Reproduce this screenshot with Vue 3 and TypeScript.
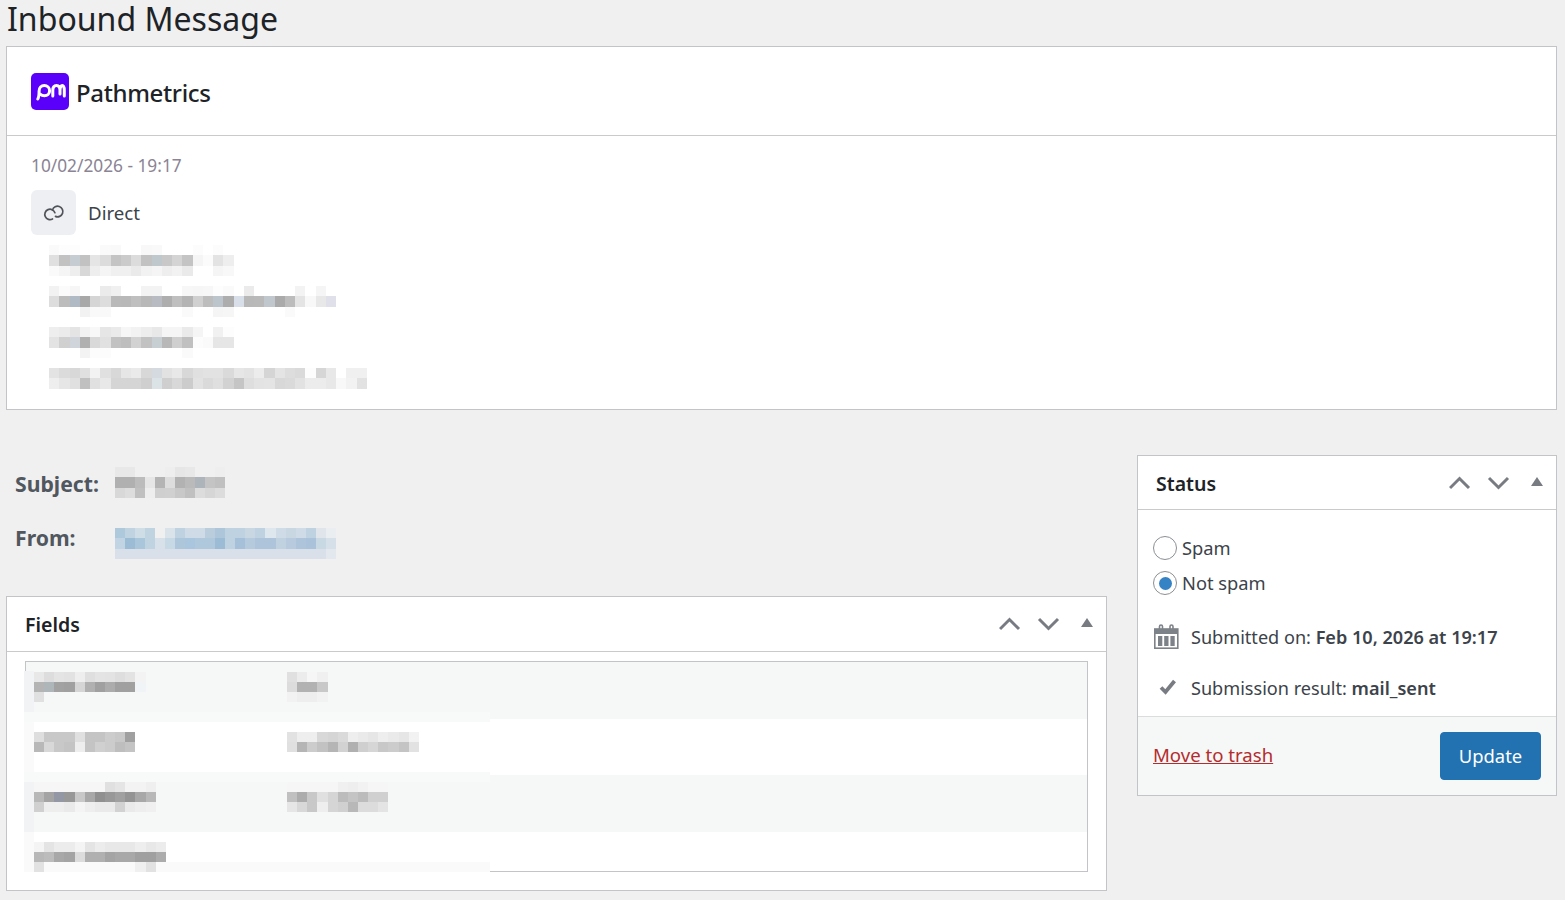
<script setup lang="ts">
const parse = (rows: string[]) =>
  rows.map((r) => r.split(' ').map((c) => (c.length === 2 ? `#${c}${c}${c}` : `#${c}`)))

const mainMosaics = [
  ['fa fd fd ff ff fa f9 ff ff f8 f9 ff ff ff fc ff fc ff', 'e0 c2 c6cdd2 c2 e5 dc c4 cb dc c2 bfc8cc c8 d4 c4 f5 fb e3 ee', 'fa f5 ee d8 ee f5 f0 f0 ea f2 f5 ee f2 ea ff ff f5 f8'],
  ['f2 fb f6 ff ff eb f0 ff ff f3 f3 ff ff f7 f6 f7 fd fa ff eb ff ff ff ff f3 ff f5 ff', 'dd bc b0bac5 a8 d5 dd b9 b8 bf b8 b8bcc2 ae bf b4 d0 bd bcc4cc ad d8dfe8 b8 b9 c0c8ce aa bc e4 f8 e8 e0e0ea', 'ff ff ff f2 f9 f9 ff ff ff ff ff ff ff fa ff ff f5 f6 ff ff ff ff ff fa ff ff ff ff'],
  ['ee eb e4 f2 f8 e6 ea f6 f2 ed e8 f5 f5 ea f5 ff f1 fd', 'e3 d0 cfd5da b0 d9 e1 c2 be d2 c2 c8cfd2 b8 cf c0 fc fa e6 e6', 'ff ff ff f3 fc fc ff ff ff ff ff ff ff fa ff ff ff ff'],
  ['e3 db d8 e0 f2 e0 d8 e6 ea d8 d5dae0 e2 e8 d8 e0 e2 e2 da e6 e3 ec d5 e4 dd da fd d6 e8 ff f0 f0', 'ee e6 e0 c0 e0 e8 d5 d5 d5 cf dce3e6 cf d8 cc e2 da df d2 c5 de e3 e4 d8 da e2 ec ec e8 f8 f2 e2'],
].map(parse)

const subject = parse([
  'e8 e8 f0 f0 f0 ee e6 e8 f0 f0 ee',
  'b0 b0 bc e6 b4 dd b2 ba adb5ba c4 c0',
  'd8 dd c0 ee cf d0 c8 c0 dc d6 dc',
])

const from = parse([
  'aec8dc bfd3e1 cfdde7 bfd3e1 f0f0f0 dae3ea bfd2e1 cfdbe6 cfdbe6 b9cddd aec6da bfd2e1 bfd2e1 c9d7e3 bfd2e1 dfe7ee cfdbe6 c9d7e3 cfdbe6 bfd2e1 dfe5ea ebeef0',
  'c0d4e3 9cbcd6 aac6db bfd3e1 d8e1ea c8d9e6 aec6da aac6de afc8dc afc8dc 9cbcd6 bfd2e1 a5c0d8 b5cbdd aec4da aec4da c0d2e0 b8cbde aec4da abc3da c9d9e3 d5e0e8',
  'd9e0ea d9e0ea d9e0ea d9e0ea d9e0ea d9e0ea d9e0ea d9e0ea d9e0ea d9e0ea d9e0ea d9e0ea d9e0ea d9e0ea d9e0ea d9e0ea d9e0ea d9e0ea d9e0ea d9e0ea d9e0ea e3e7ee',
])

const tableRows = [
  {
    cls: 'row-a', pad: 10,
    name: parse(['e8 dd e4 e2 ee df e4 e3 de e3 f3', 'b4 aeb6ba a2 a0 d5 b0 a0 ac a0 a0 f0f4f7', 'e0']),
    value: parse(['e0 ec f6 f0', 'dc b2 b2 c8', 'f2 ee ee f2']),
  },
  {
    cls: 'row-b', pad: 13,
    name: parse(['de c8 c8 c8 e0 c4 c4 cc c8 a0', 'b8 d8 c8 c4 ee c4 d0 cc be c4']),
    value: parse(['e2 ee ee d8 d5 da ee ea e6 ee ea e6 f2', 'e0 b5 cc c2 b5 d2 b0 cf d6 c8 cc c4 e2']),
  },
  {
    cls: 'row-c', pad: 7,
    name: parse(['f6 f6 f6 f6 f6 f6 f6 e0 e5 f3 f3 ef', 'b8 a4 9498a4 98 c8 a8 90 98 a0 94 a8 b8', 'd0 ee ee ea f4 ee ea ea d2 ea ee f0']),
    value: parse(['f6 f6 f6 f6 f6 f0 ee f2 f6 f6', 'c0 ac c8 e0 d5 bc c4 bc d0 d0', 'e6 d8 c8 ee d5 d0 b8 dc dc e4']),
  },
  {
    cls: 'row-d', pad: 10,
    name: parse(['f4 e4 ec ec f4 e4 ec e8 e8 e8 ee e8 ec', 'b8 bc a8 a4 dc b0 b0 a4 a8 a8 a0 a0 ac', 'e2 fa fa fa fa fa fa fa fa fa f0 e2']),
    value: [] as string[][],
  },
]

/* faint bands that spill out of the pixelated area of the table */
const bands = [
  { left: -1, top: 10, width: 10, height: 41, background: '#f1f3f5' },
  { left: -1, top: 51, width: 466, height: 10, background: '#f8f9f9' },
  { left: -1, top: 61, width: 10, height: 50, background: '#fafafa' },
  { left: -1, top: 111, width: 466, height: 10, background: '#f8f9f9' },
  { left: -1, top: 121, width: 10, height: 50, background: '#f1f3f5' },
  { left: -1, top: 171, width: 10, height: 30, background: '#fafafa' },
  { left: -1, top: 201, width: 466, height: 10, background: '#fafafa' },
]
const px = (b: Record<string, number | string>) => ({
  left: `${b.left}px`, top: `${b.top}px`, width: `${b.width}px`, height: `${b.height}px`, background: String(b.background),
})
</script>

<template>
  <div class="page">
    <h1 class="title">Inbound Message</h1>

    <section class="panel overview">
      <header class="brand">
        <svg class="logo" width="38" height="37" viewBox="0 0 38 37">
          <rect width="38" height="37" rx="5" fill="#5a00fa" />
          <g fill="none" stroke="#fff" stroke-width="3" stroke-linecap="round">
            <path d="M6.800 26c1.300-2 1.300-4.500 1.300-8 0-3 2.200-5.500 5.200-5.500s5.300 2.300 5.300 5.200-2.300 5-5.200 5c-1.500 0-3-.5-4-1.500" />
            <path d="M21.800 23v-5.500c0-3 1.500-5 3.700-5s3.500 2 3.500 5V21M29 17.500c0-3 1-5 2.300-5s2 2 2 5V23" />
          </g>
        </svg>
        <span class="brand-name">Pathmetrics</span>
      </header>
      <div class="overview-body">
        <div class="date">10/02/2026 - 19:17</div>
        <div class="source">
          <span class="source-icon">
            <svg width="24" height="18" viewBox="0 0 24 18" fill="none" stroke="#50545a" stroke-width="1.700" stroke-linecap="round">
              <path d="M12.900 8.700A5.200 5.200 0 1 0 10.500 15" />
              <path d="M10.500 6A5.300 5.300 0 1 1 13.500 12.400" />
            </svg>
          </span>
          <span class="source-label">Direct</span>
        </div>
        <div v-for="(m, i) in mainMosaics" :key="i" class="mosaic main-mosaic">
          <div v-for="(r, j) in m" :key="j" class="m-row">
            <i v-for="(c, k) in r" :key="k" :style="{ background: c }"></i>
          </div>
        </div>
      </div>
    </section>

    <main class="columns">
      <div class="left">
        <div class="meta subject-row">
          <strong class="meta-label">Subject:</strong>
          <div class="mosaic meta-mosaic">
            <div v-for="(r, j) in subject" :key="j" class="m-row">
              <i v-for="(c, k) in r" :key="k" :style="{ background: c }"></i>
            </div>
          </div>
        </div>
        <div class="meta from-row">
          <strong class="meta-label">From:</strong>
          <div class="mosaic meta-mosaic">
            <div v-for="(r, j) in from" :key="j" class="m-row">
              <i v-for="(c, k) in r" :key="k" :style="{ background: c }"></i>
            </div>
          </div>
        </div>

        <section class="panel fields">
          <header class="box-head fields-head">
            <h2>Fields</h2>
            <svg class="handles" width="96" height="20" viewBox="0 0 96 20">
              <g fill="none" stroke="#787c82" stroke-width="3">
                <path d="M1 16 10.500 6.500 20 16" />
                <path d="M40 6l9.500 9.500L59 6" />
              </g>
              <path d="M88 5l6 9H82z" fill="#787c82" />
            </svg>
          </header>
          <div class="table-wrap">
            <div class="table">
              <div v-for="row in tableRows" :key="row.cls" class="t-row" :class="row.cls" :style="{ paddingTop: `${row.pad}px` }">
                <div class="t-name mosaic table-mosaic">
                  <div v-for="(r, j) in row.name" :key="j" class="m-row">
                    <i v-for="(c, k) in r" :key="k" :style="{ background: c }"></i>
                  </div>
                </div>
                <div class="mosaic table-mosaic">
                  <div v-for="(r, j) in row.value" :key="j" class="m-row">
                    <i v-for="(c, k) in r" :key="k" :style="{ background: c }"></i>
                  </div>
                </div>
              </div>
            </div>
            <i v-for="(b, i) in bands" :key="i" class="band" :style="px(b)"></i>
          </div>
        </section>
      </div>

      <aside class="panel status">
        <header class="box-head status-head">
          <h2>Status</h2>
          <svg class="handles" width="96" height="20" viewBox="0 0 96 20">
            <g fill="none" stroke="#787c82" stroke-width="3">
              <path d="M1 16 10.500 6.500 20 16" />
              <path d="M40 6l9.500 9.500L59 6" />
            </g>
            <path d="M88 5l6 9H82z" fill="#787c82" />
          </svg>
        </header>
        <div class="status-body">
          <div class="radio-row"><span class="radio"></span><span>Spam</span></div>
          <div class="radio-row second"><span class="radio checked"></span><span>Not spam</span></div>
          <div class="info submitted">
            <svg class="info-icon" width="26" height="25" viewBox="0 0 26 25">
              <g fill="none" stroke="#7d8288" stroke-width="1.600">
                <rect x="1.800" y="5" width="23" height="19.200" />
                <path d="M6.500 6V2.500a1.500 1.500 0 0 1 3 0V6M17 6V2.500a1.500 1.500 0 0 1 3 0V6" />
              </g>
              <path fill="#7d8288" d="M2 5h23v5H2zM5 12h4.300v10H5zM11.200 12h4.300v10h-4.300zM17.400 12h4.300v10h-4.300z" />
            </svg>
            <span>Submitted on: <b>Feb 10, 2026 at 19:17</b></span>
          </div>
          <div class="info result">
            <svg class="info-icon" width="26" height="18" viewBox="0 0 26 18">
              <path d="M8 8.500l4.500 4.500 9-11" fill="none" stroke="#787c82" stroke-width="3.800" />
            </svg>
            <span>Submission result: <b>mail_sent</b></span>
          </div>
        </div>
        <footer class="status-foot">
          <a class="trash" href="#">Move to trash</a>
          <button class="update" type="button">Update</button>
        </footer>
      </aside>
    </main>
  </div>
</template>

<style>
html, body { margin: 0; background: #f0f0f0; overflow: hidden; }
</style>

<style scoped>
.page {
  box-sizing: border-box;
  height: 900px;
  overflow: hidden;
  padding: 0 8px 0 6px;
  background: #f0f0f0;
  font-family: "Noto Sans", "Open Sans", sans-serif;
  color: #3c434a;
}
.title {
  margin: 0 0 9px 1px;
  font-size: 32.050px;
  line-height: 37px;
  font-weight: 400;
  color: #1d2327;
}
.panel {
  box-sizing: border-box;
  border: 1px solid #c3c4c7;
  background: #fff;
}
.overview { height: 364px; }
.brand {
  box-sizing: border-box;
  height: 89px;
  border-bottom: 1px solid #c9cacc;
  display: flex;
  align-items: center;
  padding-left: 24px;
  gap: 8px;
}
.brand-name { font-size: 24px; font-weight: 500; letter-spacing: -0.350px; color: #1d2327; margin: 2px 0 0 -1px; }
.overview-body { padding: 18px 24px 0; }
.date { font-size: 17.300px; line-height: 24px; color: #8a8494; }
.source { display: flex; align-items: center; margin-top: 12px; gap: 12px; }
.source-icon {
  width: 45px; height: 45px;
  border-radius: 6px;
  background: #eeeff3;
  display: flex; align-items: center; justify-content: center;
}
.source-label { font-size: 18.700px; color: #3c434a; }
.mosaic { display: block; position: relative; z-index: 1; }
.m-row { display: flex; }
.m-row i { display: block; flex: none; }
.main-mosaic { margin: 10px 0 0 18px; }
.main-mosaic .m-row i { width: 10.260px; height: 10.330px; }
.columns { display: flex; gap: 30px; margin-top: 45px; align-items: flex-start; }
.left { width: 1101px; flex: none; padding-top: 12px; }
.meta { display: flex; align-items: flex-start; }
.meta-label {
  box-sizing: border-box;
  width: 109px;
  padding-left: 9px;
  font-weight: 700;
  font-size: 21.200px;
  color: #50575e;
}
.subject-row .meta-label { line-height: 34px; }
.from-row { margin-top: 27px; }
.from-row .meta-label { line-height: 19px; }
.meta-mosaic .m-row i { width: 10.040px; height: 10.340px; }
.fields { margin-top: 37px; height: 295px; }
.box-head {
  box-sizing: border-box;
  display: flex; align-items: center; justify-content: space-between;
  border-bottom: 1px solid #c9cacc;
  padding: 0 11px 0 18px;
}
.box-head h2 { margin: 0; font-size: 19.500px; font-weight: 600; color: #1d2327; }
.fields-head { height: 55px; padding-top: 1px; }
.status-head { height: 54px; padding-top: 1px; }
.handles { display: block; margin-top: -2px; }
.table-wrap { position: relative; margin: 9px 18px 0; }
.table {
  box-sizing: border-box;
  height: 211px;
  border: 1px solid #c3c4c7;
}
.t-row { box-sizing: border-box; display: flex; padding-left: 8px; }
.row-a { height: 57px; background: #f6f7f7; }
.row-b { height: 56px; background: #fff; }
.row-c { height: 57px; background: #f6f7f7; }
.row-d { height: 39px; background: #fff; }
.t-name { width: 253px; flex: none; }
.table-mosaic .m-row i { width: 10.150px; height: 10.100px; }
.band { position: absolute; display: block; }
.status { width: 420px; flex: none; height: 341px; }
.status-body { padding: 26px 15px 16px; font-size: 18.300px; line-height: 24px; height: 206px; box-sizing: border-box; }
.radio-row { display: flex; align-items: center; gap: 5px; }
.radio-row.second { margin-top: 11px; }
.radio {
  box-sizing: border-box;
  width: 24px; height: 24px;
  border-radius: 50%;
  border: 1px solid #8c8f94;
  background: #fff;
  display: flex; align-items: center; justify-content: center;
}
.radio.checked::before {
  content: "";
  width: 13px; height: 13px;
  border-radius: 50%;
  background: #3582c4;
}
.info { display: flex; align-items: center; gap: 12px; font-size: 18.100px; }
.info-icon { flex: none; display: block; }
.info b { font-weight: 600; }
.submitted { margin-top: 29px; }
.result { margin-top: 27px; }
.status-foot {
  box-sizing: border-box;
  height: 79px;
  border-top: 1px solid #dcdcde;
  background: #f6f7f7;
  display: flex; align-items: center; justify-content: space-between;
  padding: 0 15px;
}
.trash { color: #b32d2e; font-size: 18.600px; text-decoration: underline; margin-top: -3px; }
.update {
  width: 101px; height: 48px;
  border: 1px solid #2271b1;
  border-radius: 4px;
  background: #2271b1;
  color: #fff;
  font-family: inherit;
  font-size: 18.400px;
  padding: 0 0 2px;
}
</style>
